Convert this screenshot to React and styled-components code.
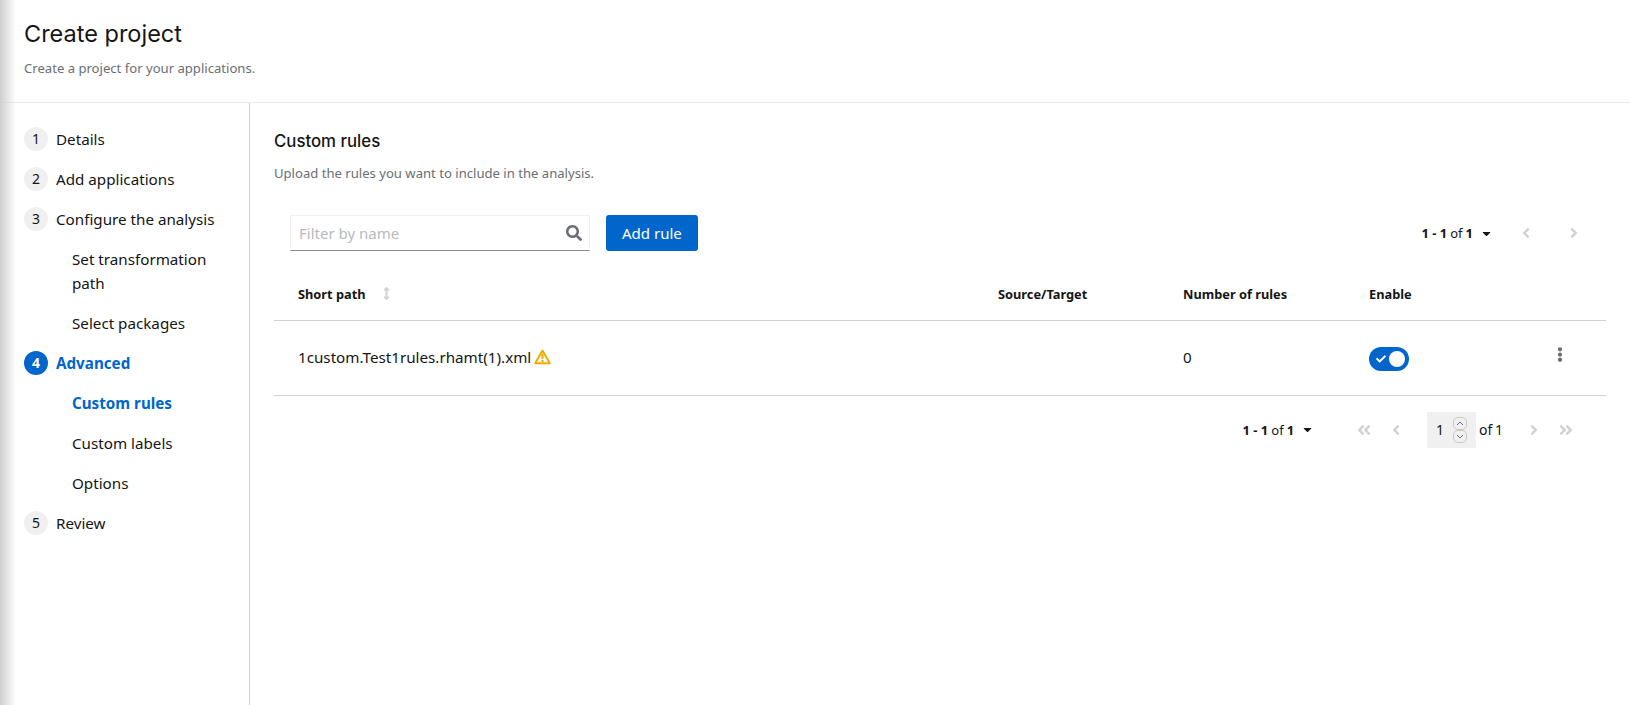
import React from "react"
import styled, { createGlobalStyle } from "styled-components"
import {
  FaAngleDoubleLeft,
  FaAngleDoubleRight,
  FaAngleLeft,
  FaAngleRight,
  FaArrowsAltV,
  FaCaretDown,
  FaCheck,
  FaEllipsisV,
  FaSearch,
} from "react-icons/fa"

const GlobalStyle = createGlobalStyle`
  html, body {
    margin: 0;
    padding: 0;
    background: #fff;
  }
  body {
    font-family: "Noto Sans", "Liberation Sans", sans-serif;
    font-size: 16px;
    line-height: 24px;
    color: #151515;
  }
  * {
    box-sizing: border-box;
  }
`

const Page = styled.div`
  position: relative;
  width: 1630px;
  height: 705px;
  overflow: hidden;
  display: flex;
  flex-direction: column;
`

const EdgeShadow = styled.div`
  position: absolute;
  left: 0;
  top: 0;
  bottom: 0;
  width: 16px;
  background: linear-gradient(to right, #cfcfcf, rgba(255, 255, 255, 0));
  pointer-events: none;
`

const Header = styled.header`
  height: 103px;
  flex: none;
  padding: 19px 24px 0;
  border-bottom: 1px solid #e9e9e9;
`

const Title = styled.h1`
  margin: 0;
  font-family: "Inter", "Liberation Sans", sans-serif;
  font-size: 23.5px;
  line-height: 30px;
  font-weight: 400;
`

const Subtitle = styled.p`
  margin: 9px 0 0;
  font-size: 13.1px;
  line-height: 21px;
  color: #6a6e73;
`

const Body = styled.div`
  flex: 1;
  display: flex;
  min-height: 0;
`

const Sidebar = styled.nav`
  width: 250px;
  flex: none;
  padding-top: 16px;
  border-right: 1px solid #d2d2d2;
`

const StepRow = styled.div`
  display: flex;
  align-items: center;
  gap: 8px;
  padding: 8px 0 8px 24px;
  color: ${(p) => (p.$active ? "#0066cc" : "#151515")};
  font-size: 15.2px;
  font-weight: ${(p) => (p.$active ? 700 : 400)};
`

const StepNumber = styled.span`
  width: 24px;
  height: 24px;
  flex: none;
  display: flex;
  align-items: center;
  justify-content: center;
  border-radius: 50%;
  font-size: 14px;
  background: ${(p) => (p.$active ? "#0066cc" : "#f0f0f0")};
  color: ${(p) => (p.$active ? "#fff" : "#151515")};
`

const SubStep = styled.div`
  padding: 8px 40px 8px 72px;
  font-size: 15.2px;
  color: ${(p) => (p.$active ? "#0066cc" : "#151515")};
  font-weight: ${(p) => (p.$active ? 700 : 400)};
`

const Main = styled.main`
  flex: 1;
  min-width: 0;
  padding: 25px 24px 0;
`

const SectionTitle = styled.h2`
  margin: 0;
  font-family: "Inter", "Liberation Sans", sans-serif;
  font-size: 16.8px;
  line-height: 27px;
  font-weight: 500;
`

const SectionText = styled.p`
  margin: 8px 0 0;
  font-size: 13.1px;
  line-height: 21px;
  color: #6a6e73;
`

const Toolbar = styled.div`
  display: flex;
  align-items: center;
  gap: 16px;
  margin-top: 31px;
  padding: 0 16px;
`

const SearchBox = styled.div`
  width: 300px;
  height: 36px;
  display: flex;
  align-items: center;
  justify-content: space-between;
  padding: 0 7px 0 8px;
  border: 1px solid #f0f0f0;
  border-bottom-color: #8a8d90;
  color: #6a6e73;
  font-size: 16px;
`

const Placeholder = styled.span`
  color: #b8bbbe;
  font-size: 15px;
`

const PrimaryButton = styled.button`
  height: 36px;
  padding: 0 16px;
  border: 0;
  border-radius: 3px;
  background: #0066cc;
  color: #fff;
  font-family: inherit;
  font-size: 15px;
`

const Pagination = styled.div`
  margin-left: auto;
  display: flex;
  align-items: center;
  font-size: 13px;
`

const PageCount = styled.span`
  display: flex;
  align-items: center;
  gap: 3px;
  font-size: 13px;
  b {
    font-weight: 700;
  }
`

const Caret = styled.span`
  display: flex;
  margin-left: 7px;
  margin-right: ${(p) => p.$gap}px;
  font-size: 13px;
  color: #151515;
`

const PageArrow = styled.span`
  width: ${(p) => p.$width}px;
  margin-right: ${(p) => p.$gap || 0}px;
  display: flex;
  justify-content: center;
  color: #d2d2d2;
  font-size: 16px;
`

const Table = styled.table`
  width: 100%;
  margin-top: 6px;
  border-collapse: collapse;
  table-layout: fixed;
`

const HeadCell = styled.th`
  height: 63px;
  padding: 11px 24px 0;
  text-align: left;
  font-size: 12.8px;
  font-weight: 700;
  border-bottom: 1px solid #d2d2d2;
`

const Cell = styled.td`
  height: 75px;
  padding: 0 24px 2px;
  font-size: 15.2px;
  border-bottom: 1px solid #d2d2d2;
`

const SortIcon = styled.span`
  display: inline-flex;
  vertical-align: -1px;
  margin-left: 14px;
  color: #d2d2d2;
  font-size: 13px;
`

const PathText = styled.span`
  display: inline-flex;
  align-items: center;
  gap: 3px;
`

const Switch = styled.span`
  width: 40px;
  height: 24px;
  margin-top: 4px;
  display: flex;
  align-items: center;
  justify-content: space-between;
  padding: 0 4px 0 7px;
  border-radius: 12px;
  background: #0066cc;
  color: #fff;
  font-size: 10px;
`

const Knob = styled.span`
  width: 16px;
  height: 16px;
  border-radius: 50%;
  background: #fff;
`

const Kebab = styled.span`
  display: flex;
  justify-content: flex-end;
  padding-right: 16px;
  margin-top: -5px;
  color: #6a6e73;
  font-size: 15px;
`

const FooterBar = styled.div`
  display: flex;
  justify-content: flex-end;
  align-items: center;
  padding: 16px 20px 0 0;
`

const PageInput = styled.div`
  width: 49px;
  height: 36px;
  display: flex;
  align-items: center;
  justify-content: space-between;
  padding: 0 9px 0 9px;
  background: #f0f0f0;
  font-size: 14px;
`

const Spinner = styled.span`
  display: flex;
  flex-direction: column;
`

const SpinButton = styled.span`
  width: 14px;
  height: 13px;
  display: flex;
  align-items: center;
  justify-content: center;
  border: 1px solid #cfc8c0;
  border-radius: 5px;
  color: #6a6e73;
`

const OfTotal = styled.span`
  margin-left: 3px;
  margin-right: 18px;
  font-size: 14px;
  word-spacing: -1px;
`

const Chevron = ({ up }) => (
  <svg width="8" height="5" viewBox="0 0 8 5" fill="none" stroke="currentColor" strokeWidth="1">
    <path d={up ? "M1 4l3-3 3 3" : "M1 1l3 3 3-3"} />
  </svg>
)

const WarningIcon = () => (
  <svg width="17" height="16" viewBox="0 0 17 16" fill="none">
    <path
      d="M8.5 1.6 L15.8 14.2 H1.2 Z"
      stroke="#f0ab00"
      strokeWidth="2"
      strokeLinejoin="round"
    />
    <path d="M8.5 4.8 V9.8" stroke="#f0ab00" strokeWidth="2.2" />
    <circle cx="8.5" cy="12" r="1.2" fill="#f0ab00" />
  </svg>
)

const Count = () => (
  <PageCount>
    <b>1 - 1</b> of <b>1</b>
  </PageCount>
)

const App = () => (
  <Page>
    <GlobalStyle />
    <Header>
      <Title>Create project</Title>
      <Subtitle>Create a project for your applications.</Subtitle>
    </Header>
    <Body>
      <Sidebar>
        <StepRow>
          <StepNumber>1</StepNumber>Details
        </StepRow>
        <StepRow>
          <StepNumber>2</StepNumber>Add applications
        </StepRow>
        <StepRow>
          <StepNumber>3</StepNumber>Configure the analysis
        </StepRow>
        <SubStep>Set transformation path</SubStep>
        <SubStep>Select packages</SubStep>
        <StepRow $active>
          <StepNumber $active>4</StepNumber>Advanced
        </StepRow>
        <SubStep $active>Custom rules</SubStep>
        <SubStep>Custom labels</SubStep>
        <SubStep>Options</SubStep>
        <StepRow>
          <StepNumber>5</StepNumber>Review
        </StepRow>
      </Sidebar>
      <Main>
        <SectionTitle>Custom rules</SectionTitle>
        <SectionText>Upload the rules you want to include in the analysis.</SectionText>
        <Toolbar>
          <SearchBox>
            <Placeholder>Filter by name</Placeholder>
            <FaSearch />
          </SearchBox>
          <PrimaryButton>Add rule</PrimaryButton>
          <Pagination>
            <Count />
            <Caret $gap={1}>
              <FaCaretDown />
            </Caret>
            <PageArrow $width={64}>
              <FaAngleLeft />
            </PageArrow>
            <PageArrow $width={32}>
              <FaAngleRight />
            </PageArrow>
          </Pagination>
        </Toolbar>
        <Table>
          <colgroup>
            <col style={{ width: "700px" }} />
            <col style={{ width: "185px" }} />
            <col style={{ width: "186px" }} />
            <col style={{ width: "185px" }} />
            <col />
          </colgroup>
          <thead>
            <tr>
              <HeadCell>
                Short path
                <SortIcon>
                  <FaArrowsAltV />
                </SortIcon>
              </HeadCell>
              <HeadCell>Source/Target</HeadCell>
              <HeadCell>Number of rules</HeadCell>
              <HeadCell>Enable</HeadCell>
              <HeadCell />
            </tr>
          </thead>
          <tbody>
            <tr>
              <Cell>
                <PathText>
                  1custom.Test1rules.rhamt(1).xml
                  <WarningIcon />
                </PathText>
              </Cell>
              <Cell />
              <Cell>0</Cell>
              <Cell>
                <Switch>
                  <FaCheck />
                  <Knob />
                </Switch>
              </Cell>
              <Cell>
                <Kebab>
                  <FaEllipsisV />
                </Kebab>
              </Cell>
            </tr>
          </tbody>
        </Table>
        <FooterBar>
          <Count />
          <Caret $gap={34}>
            <FaCaretDown />
          </Caret>
          <PageArrow $width={32}>
            <FaAngleDoubleLeft />
          </PageArrow>
          <PageArrow $width={32} $gap={15}>
            <FaAngleLeft />
          </PageArrow>
          <PageInput>
            1
            <Spinner>
              <SpinButton>
                <Chevron up />
              </SpinButton>
              <SpinButton>
                <Chevron />
              </SpinButton>
            </Spinner>
          </PageInput>
          <OfTotal>of 1</OfTotal>
          <PageArrow $width={25}>
            <FaAngleRight />
          </PageArrow>
          <PageArrow $width={40}>
            <FaAngleDoubleRight />
          </PageArrow>
        </FooterBar>
      </Main>
    </Body>
    <EdgeShadow />
  </Page>
)

export default App
